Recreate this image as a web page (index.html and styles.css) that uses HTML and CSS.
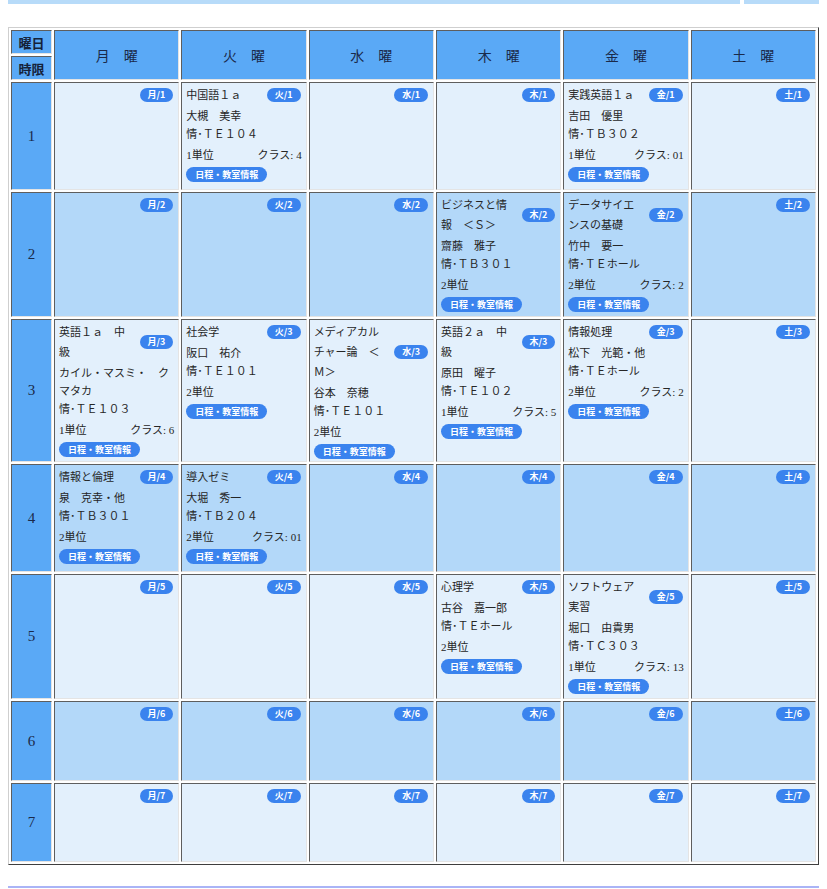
FILE: index.html
```html
<!DOCTYPE html>
<html lang="ja">
<head>
<meta charset="utf-8">
<title>時間割</title>
<link rel="stylesheet" href="styles.css">
</head>
<body>
<div class="topbar"><div class="bar-main"></div><div class="bar-side"></div></div>
<table class="timetable">
  <colgroup><col class="c-period"><col><col><col><col><col><col></colgroup>
  <tr class="hrow">
    <th class="corner">曜日</th>
    <th class="day" rowspan="2">月　曜</th>
    <th class="day" rowspan="2">火　曜</th>
    <th class="day" rowspan="2">水　曜</th>
    <th class="day" rowspan="2">木　曜</th>
    <th class="day" rowspan="2">金　曜</th>
    <th class="day" rowspan="2">土　曜</th>
  </tr>
  <tr class="hrow"><th class="corner">時限</th></tr>

  <tr class="r1">
    <th class="period">1</th>
    <td class="cell"><div class="head"><span class="badge">月/1</span></div></td>
    <td class="cell">
      <div class="head"><span class="title">中国語１ａ</span><span class="badge">火/1</span></div>
      <div class="who">大槻　美幸<br>情･ＴＥ１０４</div>
      <div class="units"><span>1単位</span><span>クラス: 4</span></div>
      <span class="btn">日程・教室情報</span>
    </td>
    <td class="cell"><div class="head"><span class="badge">水/1</span></div></td>
    <td class="cell"><div class="head"><span class="badge">木/1</span></div></td>
    <td class="cell">
      <div class="head"><span class="title">実践英語１ａ</span><span class="badge">金/1</span></div>
      <div class="who">吉田　優里<br>情･ＴＢ３０２</div>
      <div class="units"><span>1単位</span><span>クラス: 01</span></div>
      <span class="btn">日程・教室情報</span>
    </td>
    <td class="cell"><div class="head"><span class="badge">土/1</span></div></td>
  </tr>

  <tr class="r2 even">
    <th class="period">2</th>
    <td class="cell"><div class="head"><span class="badge">月/2</span></div></td>
    <td class="cell"><div class="head"><span class="badge">火/2</span></div></td>
    <td class="cell"><div class="head"><span class="badge">水/2</span></div></td>
    <td class="cell">
      <div class="head"><span class="title">ビジネスと情報　＜Ｓ＞</span><span class="badge">木/2</span></div>
      <div class="who">齋藤　雅子<br>情･ＴＢ３０１</div>
      <div class="units"><span>2単位</span></div>
      <span class="btn">日程・教室情報</span>
    </td>
    <td class="cell">
      <div class="head"><span class="title">データサイエンスの基礎</span><span class="badge">金/2</span></div>
      <div class="who">竹中　要一<br>情･ＴＥホール</div>
      <div class="units"><span>2単位</span><span>クラス: 2</span></div>
      <span class="btn">日程・教室情報</span>
    </td>
    <td class="cell"><div class="head"><span class="badge">土/2</span></div></td>
  </tr>

  <tr class="r3">
    <th class="period">3</th>
    <td class="cell">
      <div class="head"><span class="title">英語１ａ　中級</span><span class="badge">月/3</span></div>
      <div class="who">カイル・マスミ・　クマタカ<br>情･ＴＥ１０３</div>
      <div class="units"><span>1単位</span><span>クラス: 6</span></div>
      <span class="btn">日程・教室情報</span>
    </td>
    <td class="cell">
      <div class="head"><span class="title">社会学</span><span class="badge">火/3</span></div>
      <div class="who">阪口　祐介<br>情･ＴＥ１０１</div>
      <div class="units"><span>2単位</span></div>
      <span class="btn">日程・教室情報</span>
    </td>
    <td class="cell">
      <div class="head"><span class="title">メディアカルチャー論　＜Ｍ＞</span><span class="badge">水/3</span></div>
      <div class="who">谷本　奈穂<br>情･ＴＥ１０１</div>
      <div class="units"><span>2単位</span></div>
      <span class="btn">日程・教室情報</span>
    </td>
    <td class="cell">
      <div class="head"><span class="title">英語２ａ　中級</span><span class="badge">木/3</span></div>
      <div class="who">原田　曜子<br>情･ＴＥ１０２</div>
      <div class="units"><span>1単位</span><span>クラス: 5</span></div>
      <span class="btn">日程・教室情報</span>
    </td>
    <td class="cell">
      <div class="head"><span class="title">情報処理</span><span class="badge">金/3</span></div>
      <div class="who">松下　光範・他<br>情･ＴＥホール</div>
      <div class="units"><span>2単位</span><span>クラス: 2</span></div>
      <span class="btn">日程・教室情報</span>
    </td>
    <td class="cell"><div class="head"><span class="badge">土/3</span></div></td>
  </tr>

  <tr class="r4 even">
    <th class="period">4</th>
    <td class="cell">
      <div class="head"><span class="title">情報と倫理</span><span class="badge">月/4</span></div>
      <div class="who">泉　克幸・他<br>情･ＴＢ３０１</div>
      <div class="units"><span>2単位</span></div>
      <span class="btn">日程・教室情報</span>
    </td>
    <td class="cell">
      <div class="head"><span class="title">導入ゼミ</span><span class="badge">火/4</span></div>
      <div class="who">大堀　秀一<br>情･ＴＢ２０４</div>
      <div class="units"><span>2単位</span><span>クラス: 01</span></div>
      <span class="btn">日程・教室情報</span>
    </td>
    <td class="cell"><div class="head"><span class="badge">水/4</span></div></td>
    <td class="cell"><div class="head"><span class="badge">木/4</span></div></td>
    <td class="cell"><div class="head"><span class="badge">金/4</span></div></td>
    <td class="cell"><div class="head"><span class="badge">土/4</span></div></td>
  </tr>

  <tr class="r5">
    <th class="period">5</th>
    <td class="cell"><div class="head"><span class="badge">月/5</span></div></td>
    <td class="cell"><div class="head"><span class="badge">火/5</span></div></td>
    <td class="cell"><div class="head"><span class="badge">水/5</span></div></td>
    <td class="cell">
      <div class="head"><span class="title">心理学</span><span class="badge">木/5</span></div>
      <div class="who">古谷　嘉一郎<br>情･ＴＥホール</div>
      <div class="units"><span>2単位</span></div>
      <span class="btn">日程・教室情報</span>
    </td>
    <td class="cell">
      <div class="head"><span class="title">ソフトウェア実習</span><span class="badge">金/5</span></div>
      <div class="who">堀口　由貴男<br>情･ＴＣ３０３</div>
      <div class="units"><span>1単位</span><span>クラス: 13</span></div>
      <span class="btn">日程・教室情報</span>
    </td>
    <td class="cell"><div class="head"><span class="badge">土/5</span></div></td>
  </tr>

  <tr class="r6 even">
    <th class="period">6</th>
    <td class="cell"><div class="head"><span class="badge">月/6</span></div></td>
    <td class="cell"><div class="head"><span class="badge">火/6</span></div></td>
    <td class="cell"><div class="head"><span class="badge">水/6</span></div></td>
    <td class="cell"><div class="head"><span class="badge">木/6</span></div></td>
    <td class="cell"><div class="head"><span class="badge">金/6</span></div></td>
    <td class="cell"><div class="head"><span class="badge">土/6</span></div></td>
  </tr>

  <tr class="r7">
    <th class="period">7</th>
    <td class="cell"><div class="head"><span class="badge">月/7</span></div></td>
    <td class="cell"><div class="head"><span class="badge">火/7</span></div></td>
    <td class="cell"><div class="head"><span class="badge">水/7</span></div></td>
    <td class="cell"><div class="head"><span class="badge">木/7</span></div></td>
    <td class="cell"><div class="head"><span class="badge">金/7</span></div></td>
    <td class="cell"><div class="head"><span class="badge">土/7</span></div></td>
  </tr>
</table>
<div class="bottomline"></div>
</body>
</html>
```
FILE: styles.css
```css
html, body {
  background: #ffffff;
}
body {
  margin: 0 8px;
  font-family: "Liberation Serif", "Noto Sans CJK JP", serif;
  font-size: 11px;
  color: #262626;
}
.topbar {
  display: flex;
  gap: 4px;
  height: 4px;
}
.bar-main {
  flex: 1;
  background: #b7dbf9;
}
.bar-side {
  width: 75px;
  background: #b7dbf9;
}
.timetable {
  width: 100%;
  margin-top: 23px;
  table-layout: fixed;
  border-collapse: separate;
  border-spacing: 2px;
  border: 1px solid;
  border-color: #cfcfcf #3e3e3e #3e3e3e #cfcfcf;
}
.c-period {
  width: 41px;
}
.timetable th,
.timetable td {
  border: 1px solid;
  border-color: #5e5e5e #e4e4e4 #e4e4e4 #5e5e5e;
  padding: 0;
}
.hrow {
  height: 24px;
}
.corner {
  background: #5aa9f6;
  font-weight: bold;
  font-size: 13px;
  color: #15223a;
  text-align: center;
}
.day {
  background: #5aa9f6;
  font-weight: normal;
  font-size: 14px;
  color: #1a2a4a;
  text-align: center;
}
.period {
  background: #5aa9f6;
  font-weight: normal;
  font-size: 15px;
  color: #1a2a4a;
  text-align: center;
}
.r1 { height: 108px; }
.r2 { height: 125px; }
.r3 { height: 141px; }
.r4 { height: 108px; }
.r5 { height: 125px; }
.r6 { height: 80px; }
.r7 { height: 79px; }
.timetable .cell {
  vertical-align: top;
  background: #e3f0fc;
  padding: 2px 4px 2px 4px;
}
.timetable .even .cell {
  background: #b3d8f9;
}
.head {
  display: flex;
  justify-content: flex-end;
  align-items: center;
  min-height: 20px;
}
.title {
  flex: 0 0 70px;
  margin-right: auto;
  line-height: 20px;
  word-break: break-all;
}
.badge {
  flex: none;
  margin-right: 1px;
  height: 14px;
  line-height: 14px;
  padding: 0 8px;
  border-radius: 8px;
  background: #3a83ee;
  color: #fff;
  font-family: "Noto Sans CJK JP", sans-serif;
  font-weight: bold;
  font-size: 9px;
}
.who {
  margin-top: 2px;
  line-height: 18px;
}
.units {
  display: flex;
  justify-content: space-between;
  margin-top: 2px;
  line-height: 20px;
}
.btn {
  display: inline-block;
  margin-top: 2px;
  height: 15px;
  line-height: 15px;
  padding: 0 9px;
  border-radius: 8px;
  background: #3a83ee;
  color: #fff;
  font-family: "Noto Sans CJK JP", sans-serif;
  font-weight: bold;
  font-size: 9px;
}
.bottomline {
  margin-top: 21px;
  height: 2px;
  background: #aab4f6;
}
```
